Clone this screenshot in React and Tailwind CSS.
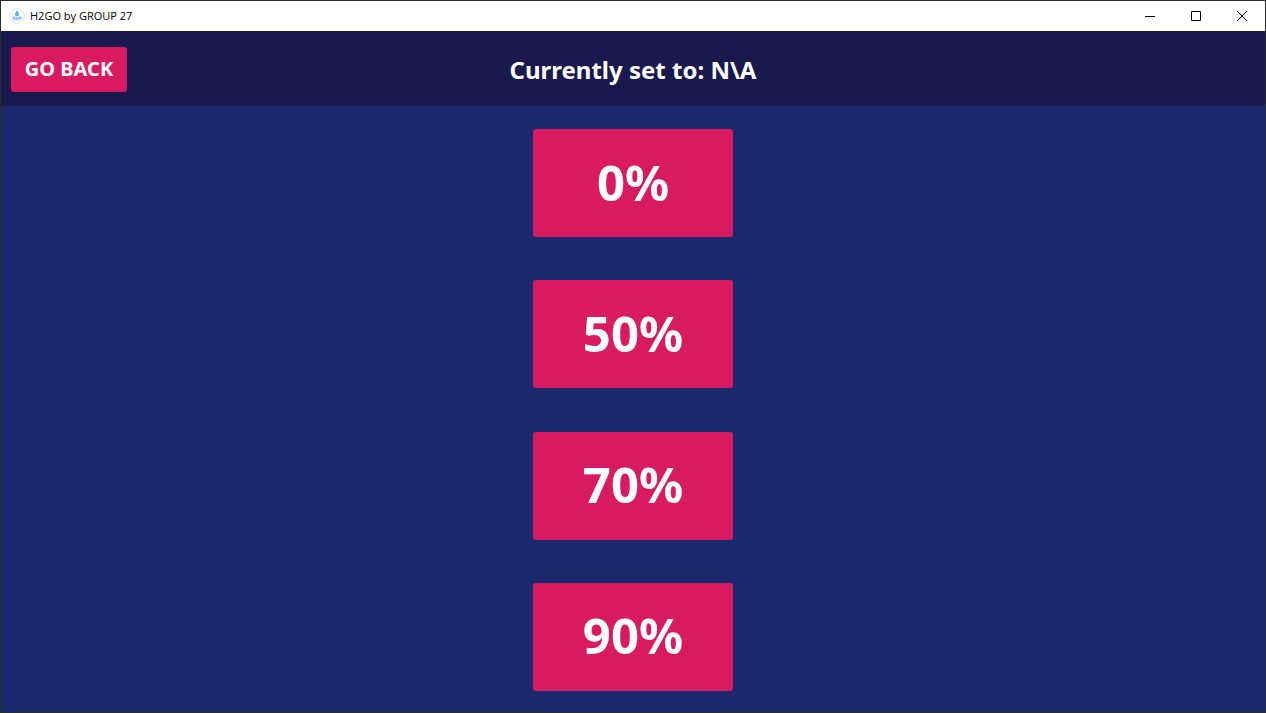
const levels = ["0%", "50%", "70%", "90%"];

function AppLogo() {
  return (
    <svg className="size-4" viewBox="0 0 16 16" aria-hidden="true">
      <circle cx="8" cy="8" r="7.3" fill="#fff" stroke="#d3d5d8" strokeWidth="0.8" />
      <path d="M8 2.4C8.7 4 10 4.900 10 6.300a2 2 0 0 1-4 0C6 4.900 7.300 4 8 2.400Z" fill="#5aaaf5" />
      <path d="M3.500 8.300h1.200v1h1v-1h1v3h-3.200ZM7 9h2.400v2.300H7ZM9.800 8.600h2.800v2.700H9.800Z" fill="#8cc4f8" />
      <path d="M4 11.200h8l-1.500 1.300h-5Z" fill="#a9d2f8" />
    </svg>
  );
}

function WindowButton({ label, children }) {
  return (
    <button type="button" aria-label={label} className="flex h-full w-[46px] items-center justify-center">
      <svg className="size-[10px]" viewBox="0 0 10 10" fill="none" stroke="#000" strokeWidth="1" aria-hidden="true">
        {children}
      </svg>
    </button>
  );
}

export default function App() {
  return (
    <div className="flex min-h-screen flex-col border border-[#2b2b2b] bg-[#1a296b] font-['Noto_Sans','Open_Sans',sans-serif] text-white">
      <div className="flex h-[30px] shrink-0 items-center justify-between bg-white pl-2 text-black">
        <div className="flex items-center gap-[5px]">
          <AppLogo />
          <span className="font-['Open_Sans','Noto_Sans',sans-serif] text-[11px] leading-4">H2GO by GROUP 27</span>
        </div>
        <div className="flex h-full">
          <WindowButton label="Minimize">
            <path d="M0 5.500h10" />
          </WindowButton>
          <WindowButton label="Maximize">
            <path d="M.5.500h9v9h-9Z" />
          </WindowButton>
          <WindowButton label="Close">
            <path d="m0 0 10 10M10 0 0 10" />
          </WindowButton>
        </div>
      </div>
      <header className="grid h-[75px] shrink-0 grid-cols-[1fr_auto_1fr] items-center bg-[#19194d] px-[10px] pt-[2px]">
        <button
          type="button"
          className="h-[45px] w-[116px] justify-self-start rounded-[3px] bg-[#d81b60] pb-[2px] text-xl leading-6 font-bold whitespace-nowrap"
        >
          GO BACK
        </button>
        <h1 className="text-2xl leading-8 font-bold">Currently set to: N\A</h1>
      </header>
      <main className="flex flex-1 flex-col items-center justify-between gap-4 pt-[23px] pb-[21px]">
        {levels.map((level) => (
          <button
            key={level}
            type="button"
            className="h-[108px] w-[200px] rounded-[3px] bg-[#d81b60] pb-[2px] text-[49px] leading-none font-bold"
          >
            {level}
          </button>
        ))}
      </main>
    </div>
  );
}
